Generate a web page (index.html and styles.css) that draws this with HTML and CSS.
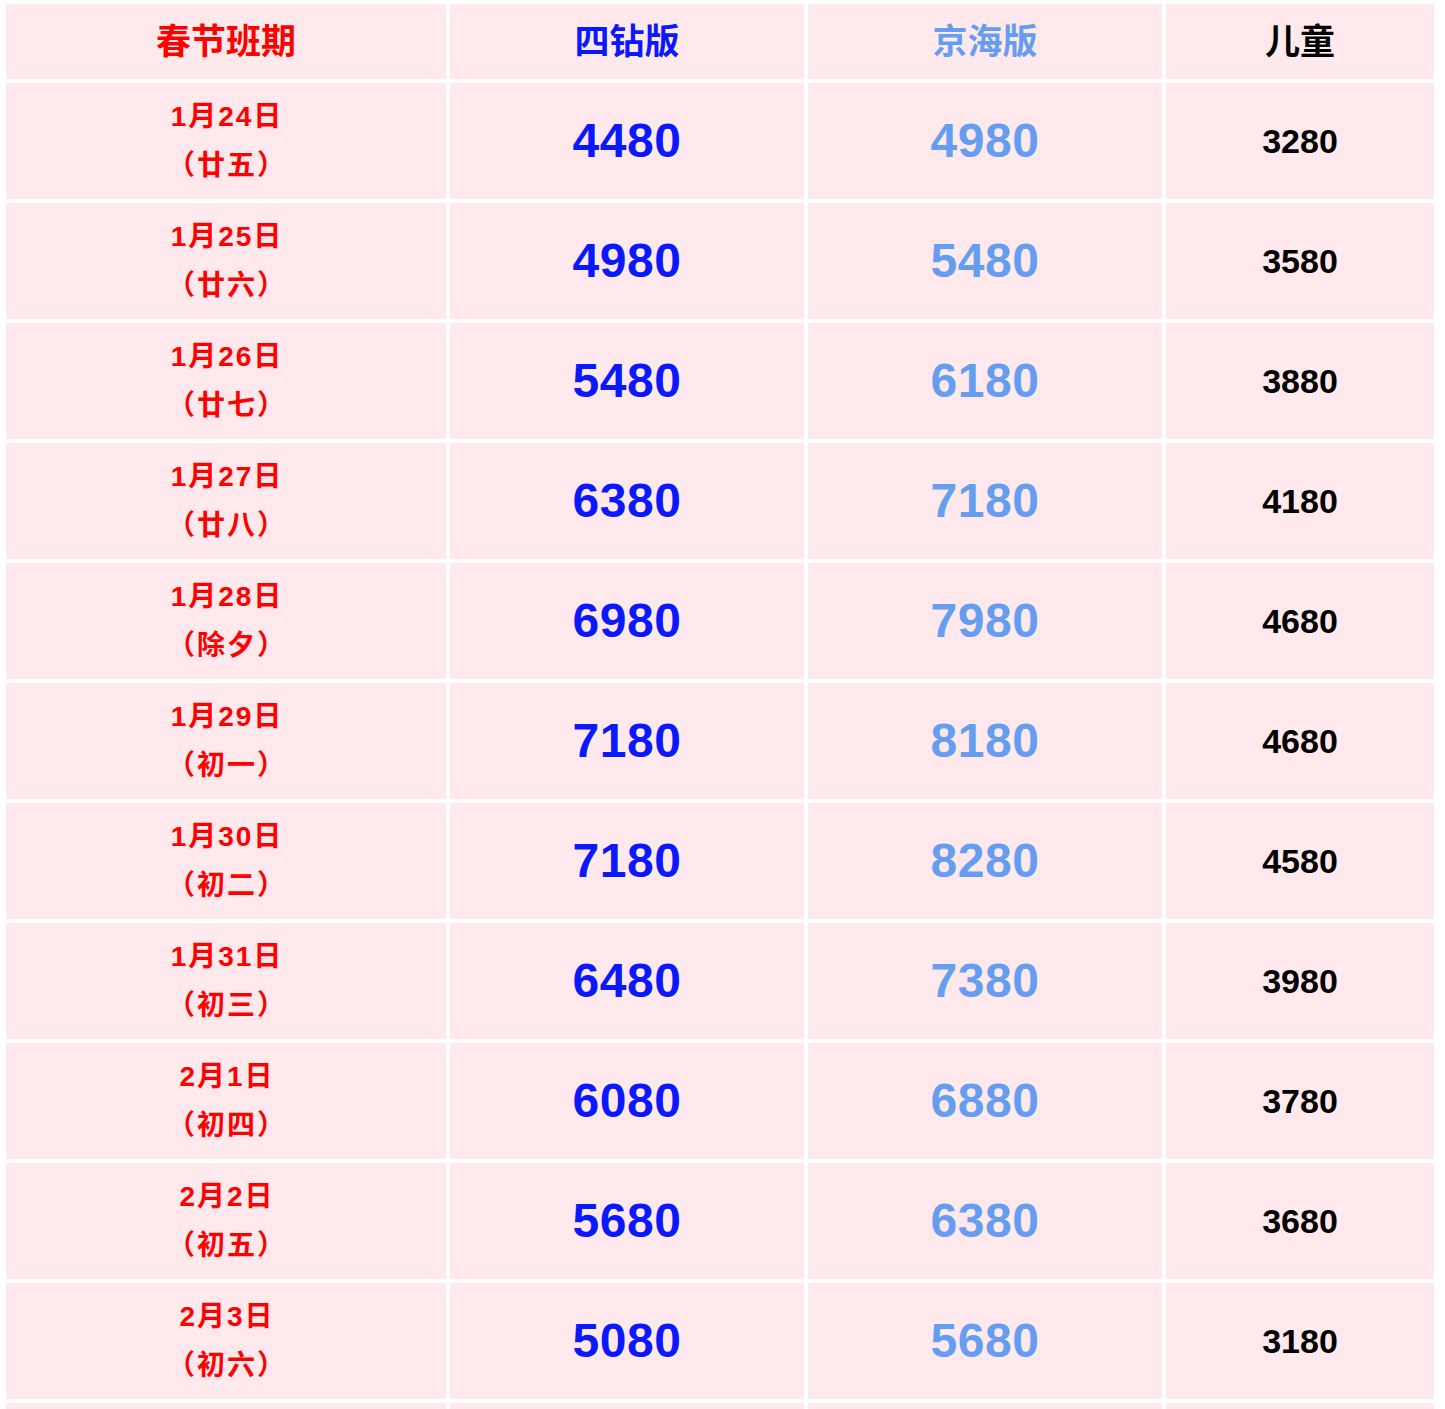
FILE: index.html
```html
<!DOCTYPE html>
<html lang="zh-CN">
<head>
<meta charset="utf-8">
<title>春节班期价格表</title>
<link rel="stylesheet" href="styles.css">
</head>
<body>
<table class="price-table">
  <colgroup>
    <col class="c-date">
    <col class="c-a">
    <col class="c-b">
    <col class="c-kid">
  </colgroup>
  <thead>
    <tr class="head-row">
      <th class="date">春节班期</th>
      <th class="sizuan">四钻版</th>
      <th class="jinghai">京海版</th>
      <th class="kid">儿童</th>
    </tr>
  </thead>
  <tbody>
    <tr><td class="date">1月24日<br>（廿五）</td><td class="sizuan big">4480</td><td class="jinghai big">4980</td><td class="kid">3280</td></tr>
    <tr><td class="date">1月25日<br>（廿六）</td><td class="sizuan big">4980</td><td class="jinghai big">5480</td><td class="kid">3580</td></tr>
    <tr><td class="date">1月26日<br>（廿七）</td><td class="sizuan big">5480</td><td class="jinghai big">6180</td><td class="kid">3880</td></tr>
    <tr><td class="date">1月27日<br>（廿八）</td><td class="sizuan big">6380</td><td class="jinghai big">7180</td><td class="kid">4180</td></tr>
    <tr><td class="date">1月28日<br>（除夕）</td><td class="sizuan big">6980</td><td class="jinghai big">7980</td><td class="kid">4680</td></tr>
    <tr><td class="date">1月29日<br>（初一）</td><td class="sizuan big">7180</td><td class="jinghai big">8180</td><td class="kid">4680</td></tr>
    <tr><td class="date">1月30日<br>（初二）</td><td class="sizuan big">7180</td><td class="jinghai big">8280</td><td class="kid">4580</td></tr>
    <tr><td class="date">1月31日<br>（初三）</td><td class="sizuan big">6480</td><td class="jinghai big">7380</td><td class="kid">3980</td></tr>
    <tr><td class="date">2月1日<br>（初四）</td><td class="sizuan big">6080</td><td class="jinghai big">6880</td><td class="kid">3780</td></tr>
    <tr><td class="date">2月2日<br>（初五）</td><td class="sizuan big">5680</td><td class="jinghai big">6380</td><td class="kid">3680</td></tr>
    <tr><td class="date">2月3日<br>（初六）</td><td class="sizuan big">5080</td><td class="jinghai big">5680</td><td class="kid">3180</td></tr>
    <tr class="next-row"><td></td><td></td><td></td><td></td></tr>
  </tbody>
</table>
</body>
</html>
```
FILE: styles.css
```css
html, body {
  margin: 0;
  padding: 0;
  background: #ffffff;
  overflow: hidden;
}
body {
  padding: 0 2px;
  font-family: "Liberation Sans", "Noto Sans CJK SC", sans-serif;
  font-weight: bold;
}
.price-table {
  width: 1436px;
  table-layout: fixed;
  border-collapse: separate;
  border-spacing: 4px;
}
.c-date { width: 440px; }
.c-a { width: 354px; }
.c-b { width: 354px; }
.c-kid { width: 268px; }
.price-table th,
.price-table td {
  background: #ffe9ec;
  text-align: center;
  vertical-align: middle;
  padding: 0;
  font-weight: bold;
}
.head-row th {
  height: 75px;
  font-size: 35px;
  line-height: 40px;
}
.price-table tbody td {
  height: 116px;
}
td.date {
  font-size: 28px;
  line-height: 49px;
  letter-spacing: 2px;
  padding-left: 2px;
}
.date { color: #ff0000; }
.sizuan { color: #0a18ff; }
.jinghai { color: #659ef0; }
.kid { color: #000000; }
td.big {
  font-size: 48px;
  line-height: 56px;
  letter-spacing: 0.5px;
}
td.kid {
  font-size: 34px;
  line-height: 40px;
}
```
